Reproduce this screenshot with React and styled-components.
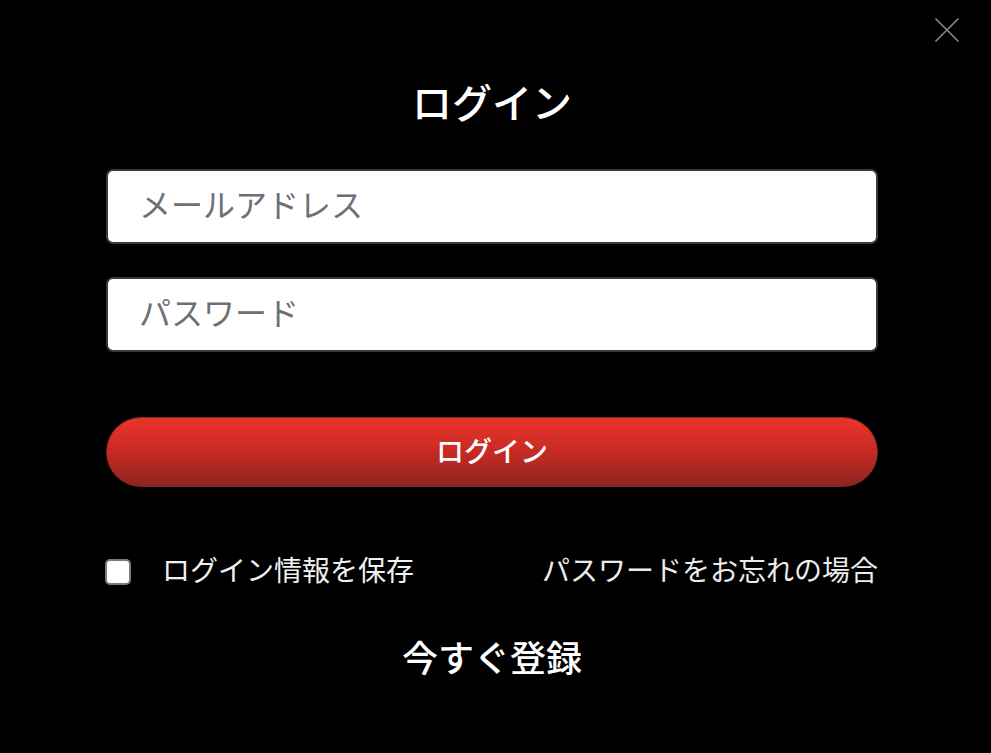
import React from "react";
import styled, { createGlobalStyle } from "styled-components";

const Global = createGlobalStyle`
  html, body { margin: 0; padding: 0; background: #000; }
  body { font-family: "Noto Sans CJK JP", "Noto Sans", sans-serif; color: #fff; }
`;

const Page = styled.div`
  position: relative;
  width: 991px;
  height: 753px;
  background: #000;
  overflow: hidden;
`;

const Close = styled.button`
  position: absolute;
  top: 17px;
  right: 31px;
  width: 26px;
  height: 26px;
  padding: 0;
  border: none;
  background: transparent;
  cursor: pointer;
`;

const Form = styled.div`
  width: 772px;
  margin-left: 106px;
  padding-top: 72px;
  display: flex;
  flex-direction: column;
`;

const Title = styled.h1`
  margin: 0 0 39px;
  font-size: 40px;
  line-height: 58px;
  font-weight: 500;
  text-align: center;
  color: #fff;
`;

const Input = styled.input`
  box-sizing: border-box;
  width: 100%;
  height: 75px;
  margin-bottom: ${(p) => p.$mb}px;
  padding: 0 0 7px 31px;
  border: 2px solid #3a3a3a;
  border-radius: 7px;
  background: #fff;
  font-family: inherit;
  font-size: 32px;
  color: #333;
  outline: none;
  &::placeholder { color: #6c7077; }
`;

const LoginButton = styled.button`
  box-sizing: border-box;
  width: 100%;
  height: 70px;
  padding: 0 0 5px;
  border: 1px solid #7c2a22;
  border-radius: 35px;
  background: linear-gradient(to bottom, #ea3429 0%, #c72b24 50%, #8c2420 100%);
  color: #fff;
  font-family: inherit;
  font-size: 28px;
  font-weight: 500;
  cursor: pointer;
`;

const OptionsRow = styled.div`
  margin-top: 70px;
  display: flex;
  align-items: center;
  justify-content: space-between;
  height: 30px;
`;

const Remember = styled.label`
  display: flex;
  align-items: center;
  gap: 31px;
  font-size: 28px;
  color: #f0f0f0;
`;

const Label = styled.span`
  padding-bottom: 6px;
`;

const Box = styled.span`
  box-sizing: border-box;
  width: 26px;
  height: 26px;
  border: 2px solid #7a7a7a;
  border-radius: 5px;
  background: #fff;
  margin-left: -1px;
`;

const Forgot = styled.a`
  padding-bottom: 6px;
  font-size: 28px;
  color: #ececec;
  text-decoration: none;
`;

const Register = styled.a`
  margin-top: 44px;
  align-self: center;
  font-size: 36px;
  line-height: 50px;
  font-weight: 500;
  color: #fff;
  text-decoration: none;
`;

export default function App() {
  return (
    <Page>
      <Global />
      <Close aria-label="close">
        <svg width="26" height="26" viewBox="0 0 26 26">
          <path d="M1.5 1.5 L24.5 24.5 M24.5 1.5 L1.5 24.5" stroke="#8a8a8a" strokeWidth="1.6" />
        </svg>
      </Close>
      <Form>
        <Title>ログイン</Title>
        <Input $mb={33} placeholder="メールアドレス" />
        <Input $mb={65} placeholder="パスワード" type="password" />
        <LoginButton>ログイン</LoginButton>
        <OptionsRow>
          <Remember>
            <Box />
            <Label>ログイン情報を保存</Label>
          </Remember>
          <Forgot href="#">パスワードをお忘れの場合</Forgot>
        </OptionsRow>
        <Register href="#">今すぐ登録</Register>
      </Form>
    </Page>
  );
}
